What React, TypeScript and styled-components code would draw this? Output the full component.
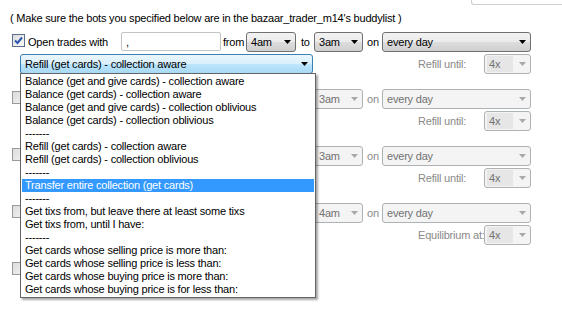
import React from "react";
import styled, { createGlobalStyle, css } from "styled-components";

const GlobalStyle = createGlobalStyle`
  html, body { margin: 0; padding: 0; background: #fff; }
  body {
    font-family: "Liberation Sans", Arial, sans-serif;
    font-size: 11px;
    letter-spacing: -0.2px;
    color: #000;
  }
`;

type Trade = {
    on: boolean;
    from: string;
    to: string;
    mode: string;
    extra: string;
    open?: boolean;
    covered?: boolean; // sits under the open drop-down list
};

const trades: Trade[] = [
    { on: true, from: "4am", to: "3am", mode: "Refill (get cards) - collection aware", extra: "Refill until:", open: true },
    { on: false, from: "4am", to: "3am", mode: "Refill (get cards) - collection aware", extra: "Refill until:", covered: true },
    { on: false, from: "4am", to: "3am", mode: "Refill (get cards) - collection oblivious", extra: "Refill until:", covered: true },
    { on: false, from: "4am", to: "4am", mode: "Get tixs from, until I have:", extra: "Equilibrium at:", covered: true },
];

const modes = [
    "Balance (get and give cards) - collection aware",
    "Balance (get cards) - collection aware",
    "Balance (get and give cards) - collection oblivious",
    "Balance (get cards) - collection oblivious",
    "-------",
    "Refill (get cards) - collection aware",
    "Refill (get cards) - collection oblivious",
    "-------",
    "Transfer entire collection (get cards)",
    "-------",
    "Get tixs from, but leave there at least some tixs",
    "Get tixs from, until I have:",
    "-------",
    "Get cards whose selling price is more than:",
    "Get cards whose selling price is less than:",
    "Get cards whose buying price is more than:",
    "Get cards whose buying price is for less than:",
];

function Arrow({ off }: { off?: boolean }) {
    return (
        <ArrowBox>
            <svg width="7" height="4" viewBox="0 0 7 4">
                <path d="M0 0 H7 L3.5 4 Z" fill={off ? "#a9a9a9" : "#000"} />
            </svg>
        </ArrowBox>
    );
}

function Combo({ value, w, off, open, shade }: { value: string; w: number; off?: boolean; open?: boolean; shade?: boolean }) {
    return (
        <Select $w={w} $off={off} $open={open}>
            <Value $shade={shade}>{value}</Value>
            <Arrow off={off} />
        </Select>
    );
}

function Tick({ checked }: { checked: boolean }) {
    return (
        <Checkbox $checked={checked}>
            {checked && (
                <svg width="9" height="9" viewBox="0 0 9 9">
                    <path d="M1 4.5 L3.5 7 L8 1.5" stroke="#2b56b0" strokeWidth="2" fill="none" />
                </svg>
            )}
        </Checkbox>
    );
}

function TradeRow({ t }: { t: Trade }) {
    const off = !t.on;
    return (
        <Row>
            <Line>
                <Tick checked={t.on} />
                {t.covered ? (
                    <Blank $w={286} />
                ) : (
                    <>
                        <Caption $w={93} $off={off}>Open trades with</Caption>
                        <Input readOnly value="," disabled={off} />
                        <Caption $w={25} $pl={2} $off={off}>from</Caption>
                        <Combo value={t.from} w={50} off={off} />
                        <Caption $w={18} $pl={5} $off={off}>to</Caption>
                    </>
                )}
                <Combo value={t.to} w={49} off={off} />
                <Caption $w={19} $pl={4} $off={off}>on</Caption>
                <Combo value="every day" w={149} off={off} />
            </Line>
            <Line $indent={8}>
                {t.covered ? (
                    <Blank $w={293} />
                ) : (
                    <ModeHolder>
                        <Combo value={t.mode} w={293} off={off} open={t.open} />
                        {t.open && (
                            <DropList>
                                {modes.map((m, i) => (
                                    <Option key={i} $active={m === "Transfer entire collection (get cards)"}>{m}</Option>
                                ))}
                            </DropList>
                        )}
                    </ModeHolder>
                )}
                <Caption $w={171} $pl={105} $off>{t.extra}</Caption>
                <Combo value="4x" w={47} off shade />
            </Line>
        </Row>
    );
}

export default function App() {
    return (
        <Page>
            <GlobalStyle />
            <TopStrip>
                <FrameCorner />
            </TopStrip>
            <Note>( Make sure the bots you specified below are in the bazaar_trader_m14's buddylist )</Note>
            <Rows>
                {trades.map((t, i) => (
                    <TradeRow key={i} t={t} />
                ))}
                <Row>
                    <Line>
                        <Tick checked={false} />
                    </Line>
                </Row>
            </Rows>
        </Page>
    );
}

const Page = styled.div`
    position: relative;
    width: 562px;
    height: 312px;
    overflow: hidden;
    background: #fff;
`

const TopStrip = styled.div`
    display: flex;
    justify-content: flex-end;
    height: 5px;
`

const FrameCorner = styled.div`
    width: 90px;
    height: 4px;
    border-left: 1px solid #cfcfcf;
    border-bottom: 1px solid #cfcfcf;
    border-bottom-left-radius: 3px;
`

const Note = styled.p`
    margin: 6px 0 0 10px;
    line-height: 14px;
    white-space: nowrap;
`

const Rows = styled.div`
    margin-top: 6px;
    padding-left: 12px;
`

const Row = styled.div`
    display: flex;
    flex-direction: column;
    gap: 1px;
    margin-bottom: 14px;
`

const Line = styled.div<{ $indent?: number }>`
    display: flex;
    align-items: center;
    height: 21px;
    padding-left: ${p => p.$indent ?? 0}px;
`

const Blank = styled.span<{ $w: number }>`
    flex: none;
    width: ${p => p.$w}px;
`

const Checkbox = styled.span<{ $checked: boolean }>`
    flex: none;
    box-sizing: border-box;
    width: 13px;
    height: 13px;
    margin: -3px 3px 0 0;
    display: flex;
    align-items: center;
    justify-content: center;
    border: 1px solid ${p => (p.$checked ? "#5a6f8e" : "#9a9a9a")};
    background: ${p => (p.$checked ? "linear-gradient(135deg, #dcdcdc, #fbfbfb)" : "linear-gradient(135deg, #dcdcdc, #f2f2f2)")};
`

const Caption = styled.span<{ $w: number; $pl?: number; $off?: boolean }>`
    flex: none;
    box-sizing: border-box;
    width: ${p => p.$w}px;
    padding-left: ${p => p.$pl ?? 0}px;
    white-space: nowrap;
    color: ${p => (p.$off ? "#8a8a8a" : "#000")};
`

const Input = styled.input`
    flex: none;
    box-sizing: border-box;
    width: 100px;
    height: 19px;
    margin: 0;
    padding: 0 4px;
    border: 1px solid #c4c4c4;
    border-radius: 2px;
    background: #fff;
    font: inherit;
    letter-spacing: inherit;
    color: #000;
    &:disabled { background: #fff; }
`

const Select = styled.div<{ $w: number; $off?: boolean; $open?: boolean }>`
    flex: none;
    box-sizing: border-box;
    width: ${p => p.$w}px;
    height: 20px;
    display: flex;
    align-items: center;
    padding: 0 0 0 2px;
    border: 1px solid #707070;
    border-radius: 3px;
    background: linear-gradient(#f2f2f2 0%, #ebebeb 50%, #dddddd 50%, #cfcfcf 100%);
    white-space: nowrap;
    ${p => p.$off && css`
        border-color: #adb2b5;
        background: #f4f4f4;
        color: #727272;
    `}
    ${p => p.$open && css`
        border-color: #3c7fb1;
        background: linear-gradient(#eaf6fd 0%, #d9f0fc 50%, #bee6fd 50%, #a7d9f5 100%);
    `}
`

const Value = styled.span<{ $shade?: boolean }>`
    flex: 1;
    align-self: stretch;
    display: flex;
    align-items: center;
    padding-left: 2px;
    margin: 1px 0;
    ${p => p.$shade && css`
        flex: none;
        width: 24px;
        background: #e6e6e6;
    `}
`

const ArrowBox = styled.span`
    flex: none;
    width: 14px;
    margin-left: auto;
    display: flex;
    justify-content: center;
    padding-right: 1px;
`

const ModeHolder = styled.div`
    position: relative;
    display: flex;
`

const DropList = styled.ul`
    position: absolute;
    top: 19px;
    left: 0;
    z-index: 5;
    box-sizing: border-box;
    width: 296px;
    margin: 0;
    padding: 1px;
    list-style: none;
    background: #fff;
    border: 1px solid #646464;
    box-shadow: 2px 2px 2px rgba(0, 0, 0, 0.35);
`

const Option = styled.li<{ $active?: boolean }>`
    height: 13px;
    line-height: 13px;
    padding-left: 3px;
    white-space: nowrap;
    background: ${p => (p.$active ? "#3399ff" : "transparent")};
    color: ${p => (p.$active ? "#fff" : "#000")};
`
